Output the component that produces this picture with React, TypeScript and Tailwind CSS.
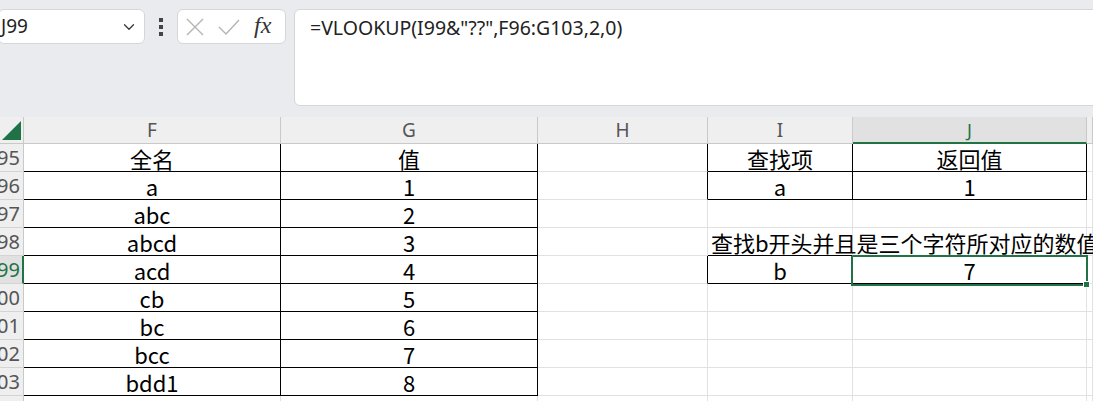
import { ChevronDown } from 'lucide-react';

const cols = [
  { key: 'F', w: 'w-[257px]' },
  { key: 'G', w: 'w-[257px]' },
  { key: 'H', w: 'w-[170px]' },
  { key: 'I', w: 'w-[145px]' },
  { key: 'J', w: 'w-[234px]' },
  { key: 'K', w: 'w-[6px]' },
];

const cells: Record<string, string> = {
  F95: '全名', G95: '值',
  F96: 'a', G96: '1',
  F97: 'abc', G97: '2',
  F98: 'abcd', G98: '3',
  F99: 'acd', G99: '4',
  F100: 'cb', G100: '5',
  F101: 'bc', G101: '6',
  F102: 'bcc', G102: '7',
  F103: 'bdd1', G103: '8',
  I95: '查找项', J95: '返回值',
  I96: 'a', J96: '1',
  I99: 'b', J99: '7',
};

const rows = [95, 96, 97, 98, 99, 100, 101, 102, 103];

// which cells get a black edge (table borders)
function blackRight(c: string, r: number) {
  if ((c === 'F' || c === 'G') && r <= 103) return true;
  if ((c === 'H' || c === 'I') && (r === 95 || r === 96 || r === 99)) return true;
  if (c === 'J' && (r === 95 || r === 96 || r === 99)) return true;
  return false;
}

function blackBottom(c: string, r: number) {
  if ((c === 'F' || c === 'G') && r <= 103) return true;
  if ((c === 'I' || c === 'J') && (r === 95 || r === 96 || r === 98 || r === 99)) return true;
  return false;
}

function Cell({ c, r, w }: { c: string; r: number; w: string }) {
  const rc = blackRight(c, r) ? 'border-r-black' : 'border-r-[#e1e1e1]';
  const bc = blackBottom(c, r) ? 'border-b-black' : 'border-b-[#e1e1e1]';
  const text = cells[c + r];
  if (c === 'I' && r === 98) {
    return (
      <div className={`${w} shrink-0 h-full border-r border-b ${rc} ${bc} flex items-center pl-[3px] overflow-visible whitespace-nowrap relative z-10`}>
        查找b开头并且是三个字符所对应的数值
      </div>
    );
  }
  return (
    <div className={`${w} shrink-0 h-full border-r border-b ${rc} ${bc} flex items-center justify-center whitespace-nowrap`}>
      {text}
    </div>
  );
}

export default function App() {
  return (
    <div className="w-[1093px] h-[401px] overflow-hidden bg-[#e9ebee] font-['Noto_Sans',sans-serif]">
      {/* formula bar area */}
      <div className="h-[117px] flex items-start pt-[9px]">
        <div className="w-[147px] -ml-[2px] h-[35px] shrink-0 bg-white border border-[#d4d6da] rounded-md flex items-center justify-between pl-[2px] pr-[6px]">
          <span className="text-[19px] text-[#222]">J99</span>
          <ChevronDown size={18} strokeWidth={1.6} className="text-[#333]" />
        </div>
        <div className="w-[32px] h-[35px] shrink-0 flex flex-col items-center justify-center gap-[3px]">
          <span className="w-[4px] h-[4px] bg-[#444]" />
          <span className="w-[4px] h-[4px] bg-[#444]" />
          <span className="w-[4px] h-[4px] bg-[#444]" />
        </div>
        <div className="w-[109px] h-[35px] shrink-0 bg-white border border-[#d4d6da] rounded-md flex items-center pl-[8px] gap-[14px]">
          <svg width="18" height="18" viewBox="0 0 18 18" className="shrink-0">
            <path d="M1 1 L17 17 M17 1 L1 17" stroke="#b4b4b4" strokeWidth="1.4" fill="none" />
          </svg>
          <svg width="22" height="16" viewBox="0 0 22 16" className="shrink-0">
            <path d="M1 8 L8 15 L21 1" stroke="#b4b4b4" strokeWidth="1.4" fill="none" />
          </svg>
          <span className="font-['Liberation_Serif',serif] italic text-[24px] leading-none text-[#333] -mt-[3px]">fx</span>
        </div>
        <div className="ml-[8px] flex-1 h-[97px] bg-white border border-[#d4d6da] rounded-l-md pl-[15px] pt-[3px] text-[19.5px] text-[#222] whitespace-nowrap -mr-[10px]">
          =VLOOKUP(I99&amp;"??",F96:G103,2,0)
        </div>
      </div>

      {/* grid */}
      <div className="relative bg-white font-['Noto_Sans_CJK_SC',sans-serif] text-[22px] leading-[26px] text-black">
        {/* column headers */}
        <div className="flex h-[27px] bg-[#efefef]">
          <div className="w-[24px] shrink-0 h-full border-r border-b border-[#c9c9c9] relative">
            <svg width="20" height="20" viewBox="0 0 20 20" className="absolute left-[2px] top-[4px]">
              <path d="M19 0 L19 19 L0 19 Z" fill="#1f7246" />
            </svg>
          </div>
          {cols.map((col) =>
            col.key === 'J' ? (
              <div key={col.key} className={`${col.w} shrink-0 h-full bg-[#e1e1e1] border-r border-r-[#c9c9c9] border-b-2 border-b-[#217346] flex items-center justify-center font-['Noto_Sans',sans-serif] text-[18px] text-[#217346]`}>
                J
              </div>
            ) : (
              <div key={col.key} className={`${col.w} shrink-0 h-full border-r border-b border-[#c9c9c9] flex items-center justify-center font-['Noto_Sans',sans-serif] text-[19px] text-[#555]`}>
                {col.key === 'K' ? '' : col.key}
              </div>
            )
          )}
        </div>

        {rows.map((r) => (
          <div key={r} className="flex h-[28px]">
            {r === 99 ? (
              <div className="w-[24px] shrink-0 h-full bg-[#e1e1e1] border-r-2 border-r-[#217346] border-b border-b-[#d4d4d4] flex items-center justify-end overflow-hidden pr-[2px] font-['Noto_Sans',sans-serif] text-[20px] text-[#217346]">
                {r}
              </div>
            ) : (
              <div className="w-[24px] shrink-0 h-full bg-[#efefef] border-r border-b border-r-[#c9c9c9] border-b-[#d4d4d4] flex items-center justify-end overflow-hidden pr-[3px] font-['Noto_Sans',sans-serif] text-[20px] text-[#555]">
                {r}
              </div>
            )}
            {cols.map((col) => (
              <Cell key={col.key} c={col.key} r={r} w={col.w} />
            ))}
          </div>
        ))}

        <div className="flex h-[28px]">
          <div className="w-[24px] shrink-0 h-full bg-[#efefef] border-r border-[#c9c9c9]" />
          {cols.map((col) => (
            <div key={col.key} className={`${col.w} shrink-0 h-full border-r border-[#e1e1e1]`} />
          ))}
        </div>

        {/* selected cell J99 */}
        <div className="absolute left-[851px] top-[138px] w-[237px] h-[31px] border-2 border-[#217346] pointer-events-none" />
        <div className="absolute left-[1083px] top-[164px] w-[7px] h-[7px] bg-[#217346] border border-white pointer-events-none" />
      </div>
    </div>
  );
}
